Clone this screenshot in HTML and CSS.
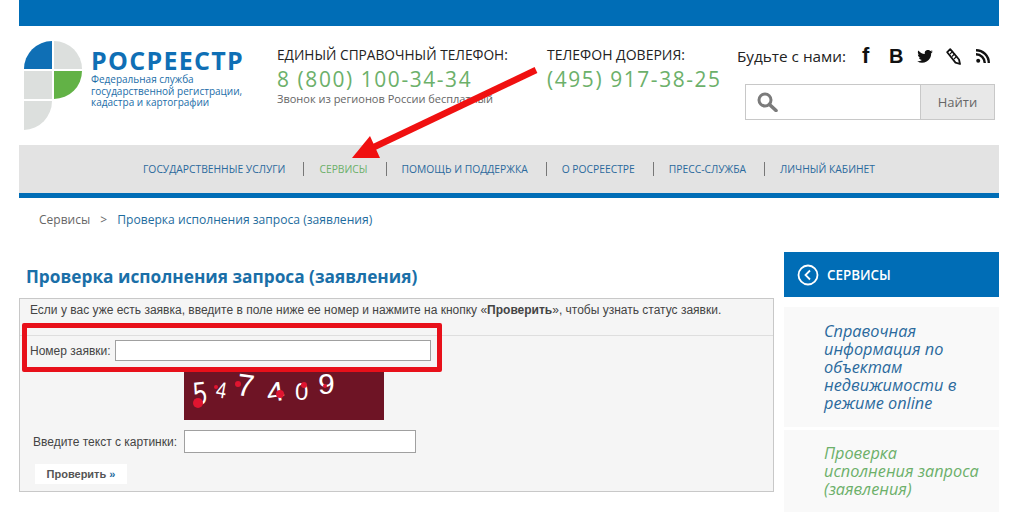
FILE: index.html
```html
<!DOCTYPE html>
<html lang="ru">
<head>
    <meta charset="UTF-8">
    <meta name="viewport" content="width=device-width, initial-scale=1.0">
    <title>Проверка исполнения запроса (заявления)</title>
    <link rel="stylesheet" href="styles.css">
</head>
<body>
    <div class="page">
        <div class="top-bar"></div>

        <header class="header">
            <a class="logo" href="#">
                <svg class="logo-mark" width="60" height="90" viewBox="0 0 60 90">
                    <path d="M28 28H0A28 28 0 0 1 28 0Z" fill="#0f6fb5"/>
                    <path d="M30 28V0A28 28 0 0 1 58 28Z" fill="#dcdfdd"/>
                    <rect x="0" y="30" width="28" height="28" fill="#dcdfdd"/>
                    <path d="M30 30H58A28 28 0 0 1 30 58Z" fill="#62b246"/>
                    <path d="M0 60H28A29 29 0 0 1 0 89Z" fill="#dcdfdd"/>
                </svg>
                <div class="logo-text">
                    <div class="logo-name">РОСРЕЕСТР</div>
                    <div class="logo-sub">Федеральная служба<br>государственной регистрации,<br>кадастра и картографии</div>
                </div>
            </a>

            <div class="contact contact-main">
                <div class="contact-label">ЕДИНЫЙ СПРАВОЧНЫЙ ТЕЛЕФОН:</div>
                <div class="contact-phone">8 (800) 100-34-34</div>
                <div class="contact-note">Звонок из регионов России бесплатный</div>
            </div>

            <div class="contact contact-trust">
                <div class="contact-label">ТЕЛЕФОН ДОВЕРИЯ:</div>
                <div class="contact-phone">(495) 917-38-25</div>
            </div>

            <div class="header-right">
                <div class="social">
                    <span class="social-title">Будьте с нами:</span>
                    <span class="social-icon social-f">f</span>
                    <span class="social-icon social-b">B</span>
                    <svg class="social-svg social-bird" width="16" height="13" viewBox="0 0 24 20">
                        <path d="M24 2.4c-.9.4-1.8.7-2.8.8 1-.6 1.8-1.600 2.200-2.700-1 .6-2 1-3.100 1.200A4.900 4.900 0 0 0 11.800 6.200C7.700 6 4.100 4 1.700.9c-1.300 2.200-.7 5.100 1.500 6.600-.8 0-1.600-.2-2.200-.6 0 2.400 1.700 4.400 3.900 4.900-.7.2-1.500.2-2.200.1.600 2 2.400 3.400 4.600 3.400A9.900 9.900 0 0 1 0 17.300 14 14 0 0 0 21.500 4.900c1-.7 1.800-1.500 2.500-2.500Z" fill="#111"/>
                    </svg>
                    <svg class="social-svg social-pen" width="15" height="17" viewBox="0 0 15 17">
                        <path d="M1.200 4.200 4.200 1.200 13 11.500l1 4.500-4.500-1.400Z" fill="#fff" stroke="#111" stroke-width="1.800" stroke-linejoin="round"/>
                        <path d="M4 6l3-3M6 8.500l3-3M8 11l3-3" stroke="#111" stroke-width="1.100"/>
                    </svg>
                    <svg class="social-svg" width="14" height="14" viewBox="0 0 14 14">
                        <circle cx="2.200" cy="11.800" r="2" fill="#111"/>
                        <path d="M0 5.200A8.800 8.800 0 0 1 8.800 14M0 1.200A12.800 12.800 0 0 1 12.800 14" fill="none" stroke="#111" stroke-width="2.400"/>
                    </svg>
                </div>
                <form class="search">
                    <span class="search-field">
                        <svg width="21" height="20" viewBox="0 0 21 20">
                            <circle cx="8" cy="8" r="6" fill="none" stroke="#7b7b7b" stroke-width="3"/>
                            <path d="M12.500 12.500 19 18.500" stroke="#7b7b7b" stroke-width="3.600" stroke-linecap="round"/>
                        </svg>
                    </span>
                    <button class="search-btn" type="button">Найти</button>
                </form>
            </div>
        </header>

        <nav class="nav">
            <a href="#">Государственные услуги</a>
            <span class="nav-sep"></span>
            <a href="#" class="active">Сервисы</a>
            <span class="nav-sep"></span>
            <a href="#">Помощь и поддержка</a>
            <span class="nav-sep"></span>
            <a href="#">О Росреестре</a>
            <span class="nav-sep"></span>
            <a href="#">Пресс-служба</a>
            <span class="nav-sep"></span>
            <a href="#">Личный кабинет</a>
        </nav>

        <div class="breadcrumbs">
            <span>Сервисы</span>
            <span class="crumb-sep">&gt;</span>
            <a href="#">Проверка исполнения запроса (заявления)</a>
        </div>

        <div class="content">
            <main class="main">
                <h1>Проверка исполнения запроса (заявления)</h1>
                <div class="request-box">
                    <p class="request-info">Если у вас уже есть заявка, введите в поле ниже ее номер и нажмите на кнопку «<b>Проверить</b>», чтобы узнать статус заявки.</p>
                    <div class="request-row">
                        <label for="num">Номер заявки:</label>
                        <input id="num" class="input-num" type="text">
                    </div>
                    <div class="captcha">
                        <span class="d1">5</span><span class="d2">4</span><span class="d3">7</span><span class="d4">4</span><span class="d5">0</span><span class="d6">9</span>
                        <i class="spot s1"></i><i class="spot s2"></i><i class="spot s3"></i><i class="spot s4"></i><i class="spot s5"></i><i class="spot s6"></i>
                    </div>
                    <div class="captcha-row">
                        <label for="cap">Введите текст с картинки:</label>
                        <input id="cap" class="input-cap" type="text">
                    </div>
                    <button class="check-btn" type="button">Проверить <span>»</span></button>
                </div>
            </main>

            <aside class="side">
                <div class="side-head">
                    <svg width="22" height="22" viewBox="0 0 22 22">
                        <circle cx="11" cy="11" r="9.500" fill="none" stroke="#fff" stroke-width="1.800"/>
                        <path d="M13 6.500 8.500 11l4.500 4.500" fill="none" stroke="#fff" stroke-width="1.800"/>
                    </svg>
                    <span>СЕРВИСЫ</span>
                </div>
                <a href="#" class="side-item">Справочная информация по объектам недвижимости в режиме online</a>
                <a href="#" class="side-item active">Проверка исполнения запроса (заявления)</a>
            </aside>
        </div>

        <!-- пометки поверх скриншота -->
        <div class="mark-box"></div>
        <svg class="mark-arrow" width="190" height="100" viewBox="0 0 190 100">
            <path d="M184 3 20 81" stroke="#f01010" stroke-width="6.500"/>
            <path d="M0 91H28L18 69Z" fill="#f01010"/>
        </svg>
    </div>
</body>
</html>
```

FILE: styles.css
```css
* {
    box-sizing: border-box;
}
html, body {
    margin: 0;
    height: 514px;
    overflow: hidden;
}
body {
    font-family: "Open Sans", sans-serif;
    background: #fff;
    color: #222;
}
a {
    text-decoration: none;
}
.page {
    position: relative;
    width: 980px;
    margin-left: 19px;
}
.top-bar {
    height: 26px;
    background: #006db6;
}

/* шапка */
.header {
    display: flex;
    height: 119px;
    padding: 15px 0 0 5px;
}
.logo {
    display: flex;
    width: 253px;
}
.logo-mark {
    flex: none;
}
.logo-text {
    margin-left: 7px;
    padding-top: 9px;
}
.logo-name {
    font-size: 25px;
    line-height: 20px;
    font-weight: 700;
    color: #0f6fb5;
    letter-spacing: 1.3px;
}
.logo-sub {
    font-size: 10px;
    line-height: 11.500px;
    color: #1b6da8;
    margin-top: 4px;
    white-space: nowrap;
}
.contact {
    padding-top: 4px;
}
.contact-main {
    width: 270px;
}
.contact-trust {
    width: 190px;
}
.contact-label {
    font-size: 13.700px;
    line-height: 20px;
    color: #222;
    white-space: nowrap;
}
.contact-trust .contact-label {
    font-size: 14px;
}
.contact-phone {
    font-size: 20.900px;
    line-height: 28px;
    color: #6cb06a;
    letter-spacing: 1.6px;
    white-space: nowrap;
}
.contact-note {
    font-size: 11px;
    line-height: 12px;
    color: #666;
    white-space: nowrap;
}
.header-right {
    flex: 1;
    padding-top: 4px;
}
.social {
    display: flex;
    align-items: center;
    height: 22px;
}
.social-title {
    font-size: 15.300px;
    width: 125px;
    white-space: nowrap;
}
.social-icon {
    font-family: "Liberation Sans", sans-serif;
    font-weight: 700;
    color: #111;
}
.social-f {
    width: 27px;
    font-size: 22px;
}
.social-b {
    width: 28px;
    font-size: 20px;
}
.social-bird {
    margin-right: 13px;
}
.social-pen {
    margin-right: 15px;
}
.search {
    display: flex;
    width: 250px;
    height: 36px;
    margin: 17px 0 0 8px;
    border: 1px solid #c8c8c8;
}
.search-field {
    flex: 1;
    padding: 7px 0 0 11px;
    background: #fff;
}
.search-btn {
    width: 74px;
    border: 0;
    border-left: 1px solid #c8c8c8;
    background: #e8e8e8;
    color: #666;
    font-family: "Open Sans", sans-serif;
    font-size: 13px;
    padding: 0;
}

/* меню */
.nav {
    display: flex;
    justify-content: center;
    align-items: center;
    height: 53px;
    background: #e3e3e3;
    border-bottom: 5px solid #006db6;
}
.nav a {
    font-size: 10.300px;
    color: #2b6a9d;
    text-transform: uppercase;
    white-space: nowrap;
}
.nav a.active {
    color: #6cb06a;
}
.nav-sep {
    width: 1px;
    height: 14px;
    margin: 0 15px 0 18px;
    background: #777;
}
.breadcrumbs {
    padding: 13px 0 0 20px;
    height: 54px;
    font-size: 12px;
    line-height: 17px;
    color: #666;
}
.breadcrumbs a {
    color: #1e6c9e;
    font-size: 12.100px;
}
.crumb-sep {
    margin: 0 7px;
}

/* контент */
.content {
    display: flex;
    justify-content: space-between;
    align-items: flex-start;
}
.main {
    width: 755px;
}
h1 {
    margin: 0;
    padding: 13px 0 0 7px;
    height: 46px;
    font-size: 17.250px;
    line-height: 24px;
    font-weight: 700;
    color: #1a6fa8;
}
.request-box {
    height: 194px;
    border: 1px solid #c8c8c8;
    background: #f5f5f5;
    font-family: "Liberation Sans", sans-serif;
    font-size: 12px;
    color: #444;
}
.request-info {
    margin: 0;
    height: 37px;
    padding: 3px 0 0 10px;
    line-height: 16px;
    border-bottom: 1px solid #dedede;
}
.request-row {
    display: flex;
    align-items: center;
    padding: 4px 0 0 10px;
}
.request-row label {
    margin-right: 4px;
}
input {
    background: #fff;
    border: 1px solid #a0a0a0;
    padding: 0;
}
.input-num {
    width: 316px;
    height: 21px;
}
.captcha {
    position: relative;
    width: 200px;
    height: 48px;
    margin: 11px 0 0 164px;
    background: #6e1425;
    color: #fff;
    font-family: "Liberation Sans", sans-serif;
    line-height: 1;
}
.captcha span {
    position: absolute;
}
.d1 { left: 7px; top: 5px; transform: rotate(-6deg) scaleX(.75); font-size: 32px; }
.d2 { left: 31px; top: 7px; transform: rotate(10deg) scaleX(.8); font-size: 23px; }
.d3 { left: 53px; top: -2px; transform: rotate(8deg); font-size: 31px; }
.d4 { left: 84px; top: 7px; transform: rotate(-8deg) scaleX(1.2); font-size: 27px; }
.d5 { left: 111px; top: 8px; font-size: 24px; }
.d6 { left: 134px; top: -3px; font-size: 30px; }
.spot {
    position: absolute;
    width: 6px;
    height: 6px;
    border-radius: 50%;
    background: #e01530;
}
.s1 { left: 9px; top: 26px; width: 10px; height: 10px; }
.s2 { left: 30px; top: 13px; width: 4px; height: 4px; }
.s3 { left: 51px; top: 9px; }
.s4 { left: 92px; top: 18px; width: 8px; height: 8px; }
.s5 { left: 117px; top: 10px; }
.s6 { left: 139px; top: 12px; width: 4px; height: 4px; }
.captcha-row {
    display: flex;
    align-items: center;
    margin-top: 10px;
    padding-left: 13px;
}
.captcha-row label {
    width: 151px;
    white-space: nowrap;
}
.input-cap {
    width: 232px;
    height: 23px;
}
.check-btn {
    display: block;
    width: 92px;
    height: 20px;
    margin: 11px 0 0 15px;
    padding: 0;
    border: 0;
    background: #fff;
    color: #555;
    font-family: "Liberation Sans", sans-serif;
    font-size: 11px;
    font-weight: 700;
}
.check-btn span {
    color: #1e6c9e;
}

/* правая колонка */
.side {
    width: 215px;
}
.side-head {
    display: flex;
    align-items: center;
    gap: 8px;
    height: 45px;
    padding-left: 13px;
    background: #006db6;
    color: #fff;
    font-size: 13.400px;
    font-weight: 600;
}
.side-item {
    display: block;
    margin-top: 3px;
    padding: 14px 15px 14px 40px;
    background: #f9f9f9;
    font-size: 16.300px;
    line-height: 18px;
    font-style: italic;
    color: #2b6a9d;
}
.side-item:first-of-type {
    margin-top: 10px;
    padding: 15px 15px 15px 40px;
}
.side-item.active {
    color: #6cb06a;
}

/* красные пометки */
.mark-box {
    position: absolute;
    left: 3px;
    top: 323px;
    width: 420px;
    height: 49px;
    border: 5px solid #e8101a;
    border-radius: 2px;
}
.mark-arrow {
    position: absolute;
    left: 333px;
    top: 67px;
}
```
